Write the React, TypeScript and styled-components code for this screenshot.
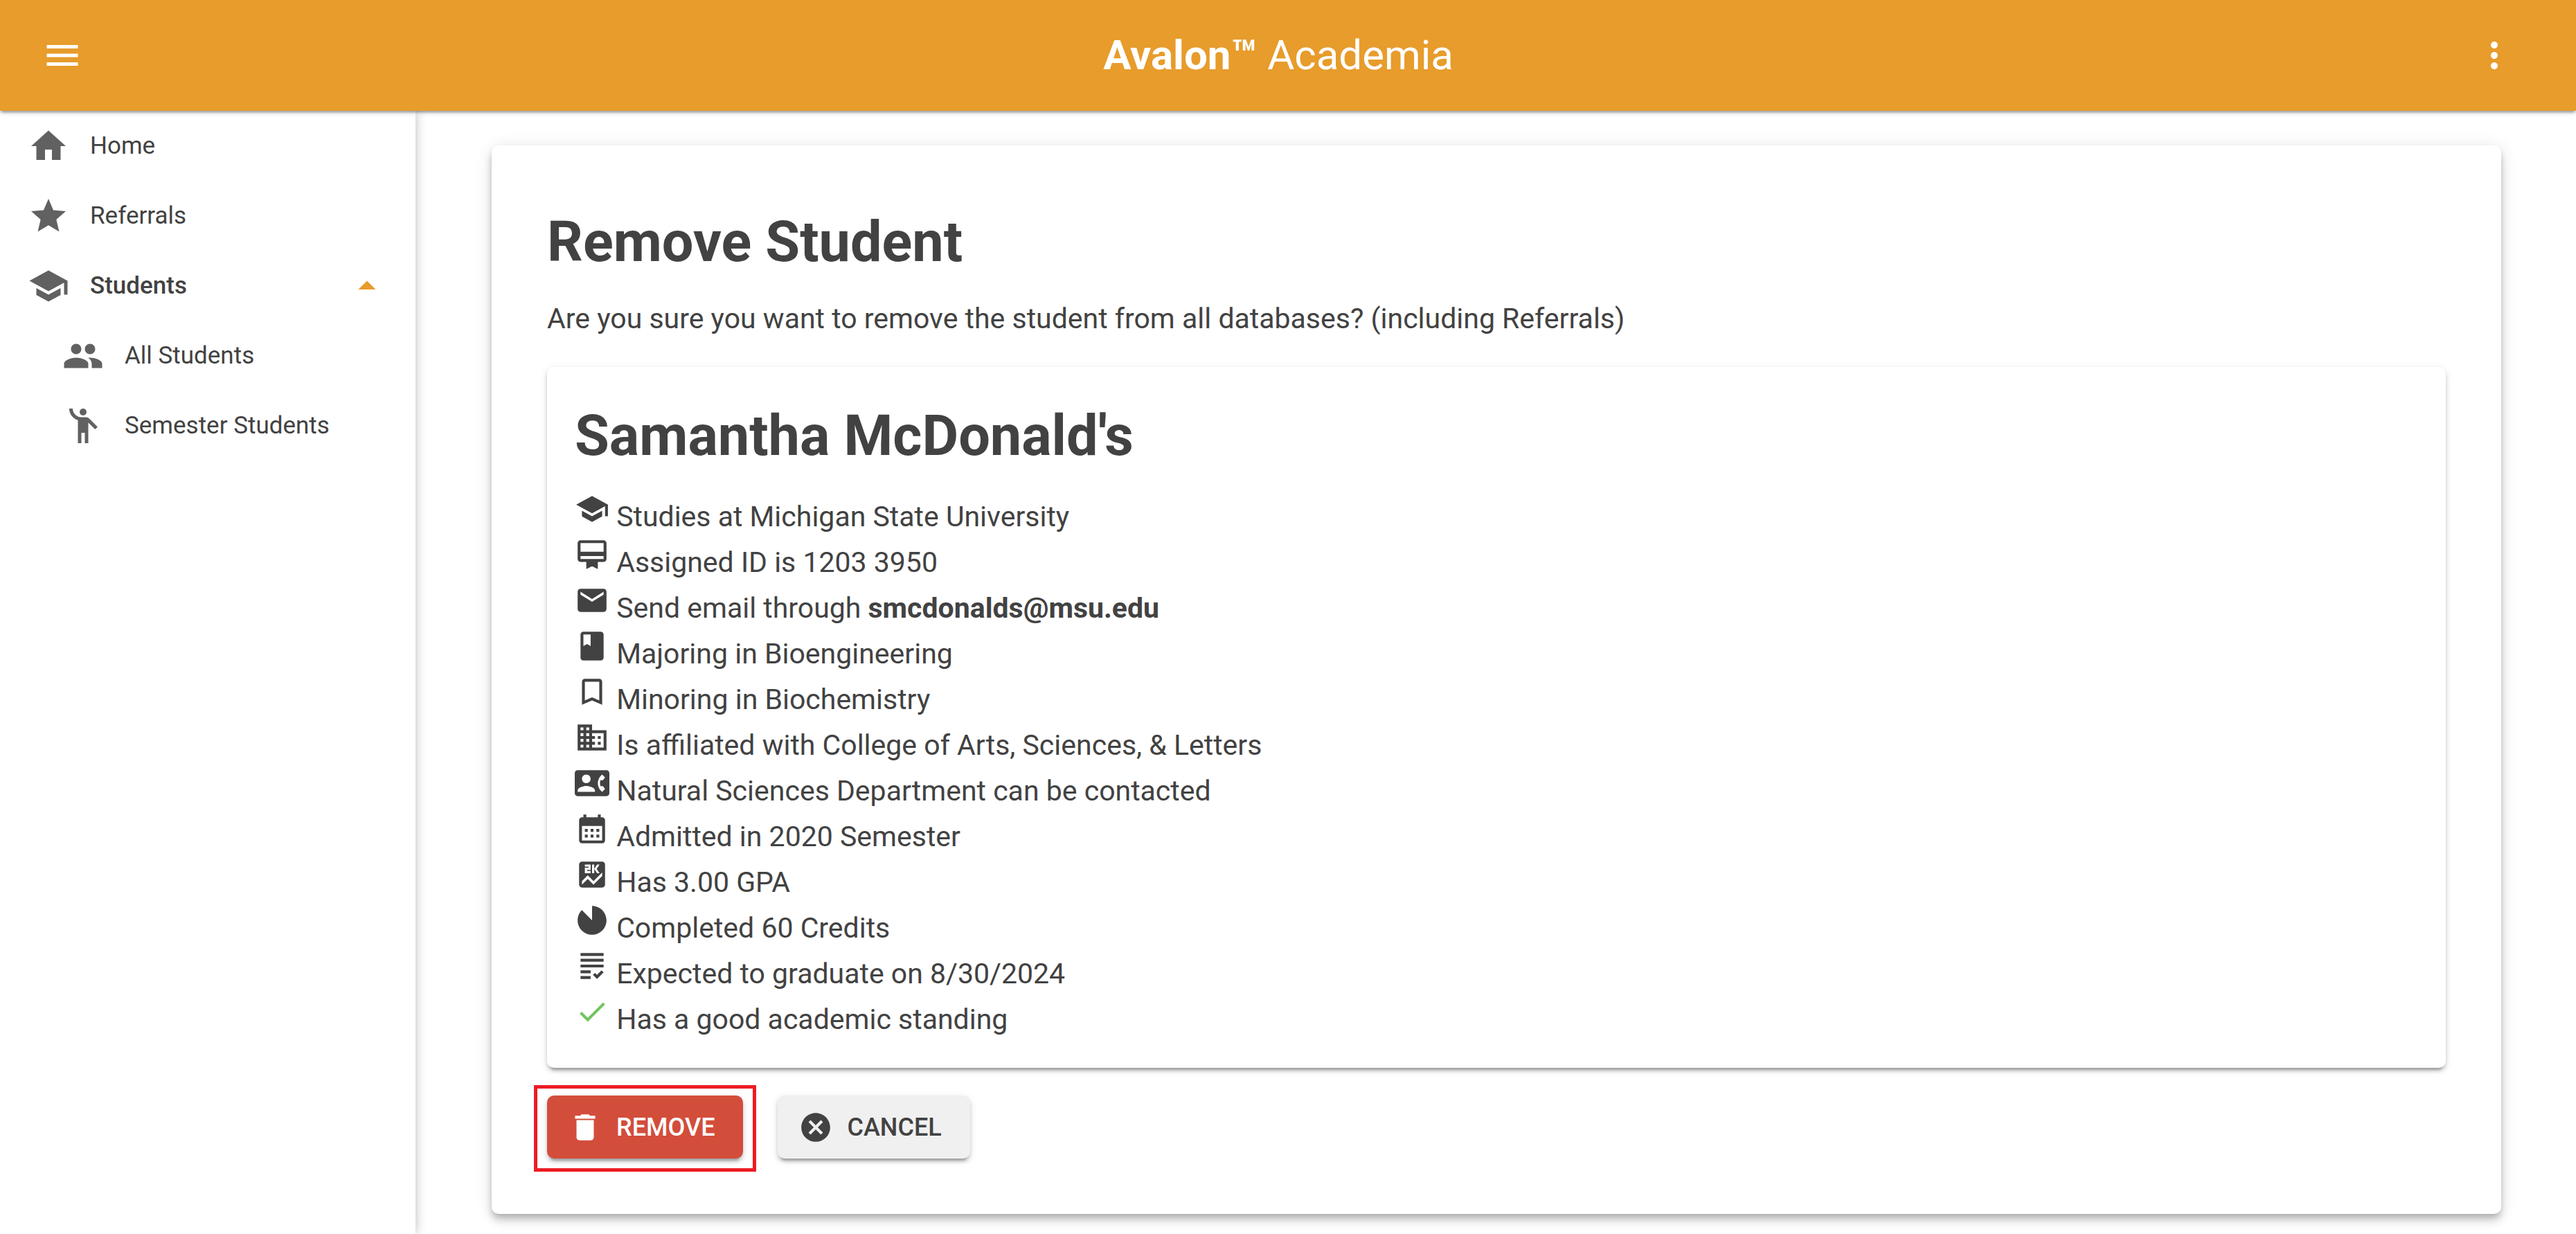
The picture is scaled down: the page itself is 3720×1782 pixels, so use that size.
import React, { useState } from "react";
import styled, { createGlobalStyle, css } from "styled-components";
import type { IconType } from "react-icons";
import {
  MdArrowDropUp,
  MdBook,
  MdBookmarkBorder,
  MdBusiness,
  MdCalendarMonth,
  MdCancel,
  MdCardMembership,
  MdContactPhone,
  MdDelete,
  MdDone,
  MdEmail,
  MdEmojiPeople,
  MdGrading,
  MdIncompleteCircle,
  MdMenu,
  MdMoreVert,
  MdPeople,
  MdSchool,
  MdScore,
  MdStar,
} from "react-icons/md";

const color = {
  brand: "#e79c2b",
  text: "#424242",
  icon: "#616161",
  danger: "#d34d3b",
  neutral: "#f0f0f0",
  good: "#6fc55c",
  marker: "#ed1c24",
};

const GlobalStyle = createGlobalStyle`
  *, *::before, *::after { box-sizing: border-box; }
  body {
    margin: 0;
    background: #fff;
    color: ${color.text};
    font-family: Roboto, "Liberation Sans", sans-serif;
    font-size: 41px;
    line-height: 60px;
  }
  h1, h2, p, ul { margin: 0; padding: 0; }
  ul { list-style: none; }
  button { font-family: inherit; border: 0; cursor: pointer; }
`;

const TopBar = styled.header`
  position: relative;
  z-index: 2;
  display: flex;
  align-items: center;
  height: 160px;
  padding: 0 58px 0 30px;
  background: ${color.brand};
  color: #fff;
  box-shadow:
    0 5px 3px -3px rgba(0, 0, 0, 0.2),
    0 3px 3px 0 rgba(0, 0, 0, 0.14),
    0 3px 8px 0 rgba(0, 0, 0, 0.12);
`;

const IconButton = styled.button`
  display: flex;
  align-items: center;
  justify-content: center;
  width: 120px;
  height: 120px;
  padding: 0;
  background: none;
  color: inherit;
  font-size: 60px;
`;

const Brand = styled.div`
  flex: 1;
  text-align: center;
  font-size: 60px;
  line-height: 80px;
`;

const Body = styled.div`
  display: flex;
  align-items: stretch;
  min-height: calc(100vh - 160px);
`;

const Sidebar = styled.nav`
  flex: none;
  width: 600px;
  box-shadow: 0 0 15px rgba(0, 0, 0, 0.28);
`;

const navItem = css<{ $nested?: boolean }>`
  display: flex;
  align-items: center;
  gap: 30px;
  width: 100%;
  height: 101px;
  padding: 0 40px 0 ${(p) => (p.$nested ? 90 : 40)}px;
  background: none;
  color: ${color.text};
  font-size: 35px;
  line-height: 50px;
  text-align: left;
  text-decoration: none;
`;

const NavLink = styled.a<{ $nested?: boolean }>`
  ${navItem}
`;

const NavToggle = styled.button<{ $nested?: boolean }>`
  ${navItem}
  font-weight: 500;
`;

const NavIcon = styled.span`
  display: flex;
  color: ${color.icon};
  font-size: 60px;
`;

const Arrow = styled.span<{ $open: boolean }>`
  display: flex;
  margin-left: auto;
  color: ${color.brand};
  font-size: 60px;
  transform: rotate(${(p) => (p.$open ? 0 : 180)}deg);
`;

const Main = styled.main`
  flex: 1;
  min-width: 0;
  padding: 50px 108px 29px 110px;
`;

const Panel = styled.section`
  padding: 80px;
  border-radius: 10px;
  background: #fff;
  box-shadow:
    0 5px 10px -3px rgba(0, 0, 0, 0.2),
    0 10px 12px 0 rgba(0, 0, 0, 0.14),
    0 3px 25px 0 rgba(0, 0, 0, 0.12);
`;

const Title = styled.h1`
  font-size: 81px;
  line-height: 120px;
  font-weight: 700;
`;

const Question = styled.p`
  margin: 20px 0 40px;
`;

const StudentCard = styled.article`
  padding: 40px;
  border-radius: 10px;
  background: #fff;
  box-shadow:
    0 8px 3px -5px rgba(0, 0, 0, 0.2),
    0 5px 5px 0 rgba(0, 0, 0, 0.14),
    0 3px 12px 0 rgba(0, 0, 0, 0.12);
`;

const Facts = styled.ul`
  margin-top: 20px;
`;

const Fact = styled.li<{ $tint?: string }>`
  svg {
    width: 50px;
    height: 50px;
    vertical-align: baseline;
    color: ${(p) => p.$tint ?? "inherit"};
  }
`;

const Actions = styled.div`
  display: flex;
  gap: 50px;
  margin-top: 40px;
`;

const ActionButton = styled.button<{ $danger?: boolean }>`
  display: flex;
  align-items: center;
  gap: 20px;
  height: 91px;
  padding: 0 41px 0 30px;
  border-radius: 10px;
  background: ${(p) => (p.$danger ? color.danger : color.neutral)};
  color: ${(p) => (p.$danger ? "#fff" : color.text)};
  font-size: 36px;
  line-height: 50px;
  font-weight: 500;
  text-transform: uppercase;
  box-shadow:
    0 8px 3px -5px rgba(0, 0, 0, 0.2),
    0 5px 5px 0 rgba(0, 0, 0, 0.14),
    0 3px 12px 0 rgba(0, 0, 0, 0.12);

  svg {
    width: 50px;
    height: 50px;
  }
`;

const Marked = styled.div`
  position: relative;

  &::after {
    content: "";
    position: absolute;
    inset: -15px -19px -19px;
    border: 5px solid ${color.marker};
    pointer-events: none;
  }
`;

const HomeIcon = () => (
  <svg viewBox="0 0 24 24" width="1em" height="1em" fill="currentColor" aria-hidden="true">
    <path d="M10 20v-6h4v6h5v-8h3L12 3 2 12h3v8z" />
  </svg>
);

const facts: { icon: IconType; text: React.ReactNode; tint?: string }[] = [
  { icon: MdSchool, text: "Studies at Michigan State University" },
  { icon: MdCardMembership, text: "Assigned ID is 1203 3950" },
  { icon: MdEmail, text: <>Send email through <strong>smcdonalds@msu.edu</strong></> },
  { icon: MdBook, text: "Majoring in Bioengineering" },
  { icon: MdBookmarkBorder, text: "Minoring in Biochemistry" },
  { icon: MdBusiness, text: "Is affiliated with College of Arts, Sciences, & Letters" },
  { icon: MdContactPhone, text: "Natural Sciences Department can be contacted" },
  { icon: MdCalendarMonth, text: "Admitted in 2020 Semester" },
  { icon: MdScore, text: "Has 3.00 GPA" },
  { icon: MdIncompleteCircle, text: "Completed 60 Credits" },
  { icon: MdGrading, text: "Expected to graduate on 8/30/2024" },
  { icon: MdDone, text: "Has a good academic standing", tint: color.good },
];

export default function App() {
  const [open, setOpen] = useState(true);

  return (
    <>
      <GlobalStyle />
      <TopBar>
        <IconButton type="button" aria-label="Menu">
          <MdMenu />
        </IconButton>
        <Brand>
          <strong>Avalon™</strong> Academia
        </Brand>
        <IconButton type="button" aria-label="More options">
          <MdMoreVert />
        </IconButton>
      </TopBar>
      <Body>
        <Sidebar>
          <NavLink href="#home">
            <NavIcon><HomeIcon /></NavIcon>
            Home
          </NavLink>
          <NavLink href="#referrals">
            <NavIcon><MdStar /></NavIcon>
            Referrals
          </NavLink>
          <NavToggle type="button" aria-expanded={open} onClick={() => setOpen(!open)}>
            <NavIcon><MdSchool /></NavIcon>
            Students
            <Arrow $open={open}><MdArrowDropUp /></Arrow>
          </NavToggle>
          {open && (
            <>
              <NavLink $nested href="#all-students">
                <NavIcon><MdPeople /></NavIcon>
                All Students
              </NavLink>
              <NavLink $nested href="#semester-students">
                <NavIcon><MdEmojiPeople /></NavIcon>
                Semester Students
              </NavLink>
            </>
          )}
        </Sidebar>
        <Main>
          <Panel>
            <Title>Remove Student</Title>
            <Question>
              Are you sure you want to remove the student from all databases? (including Referrals)
            </Question>
            <StudentCard>
              <Title as="h2">Samantha McDonald's</Title>
              <Facts>
                {facts.map(({ icon: Icon, text, tint }, i) => (
                  <Fact key={i} $tint={tint}>
                    <Icon aria-hidden="true" /> {text}
                  </Fact>
                ))}
              </Facts>
            </StudentCard>
            <Actions>
              <Marked>
                <ActionButton $danger type="button">
                  <MdDelete aria-hidden="true" />
                  Remove
                </ActionButton>
              </Marked>
              <ActionButton type="button">
                <MdCancel aria-hidden="true" />
                Cancel
              </ActionButton>
            </Actions>
          </Panel>
        </Main>
      </Body>
    </>
  );
}
